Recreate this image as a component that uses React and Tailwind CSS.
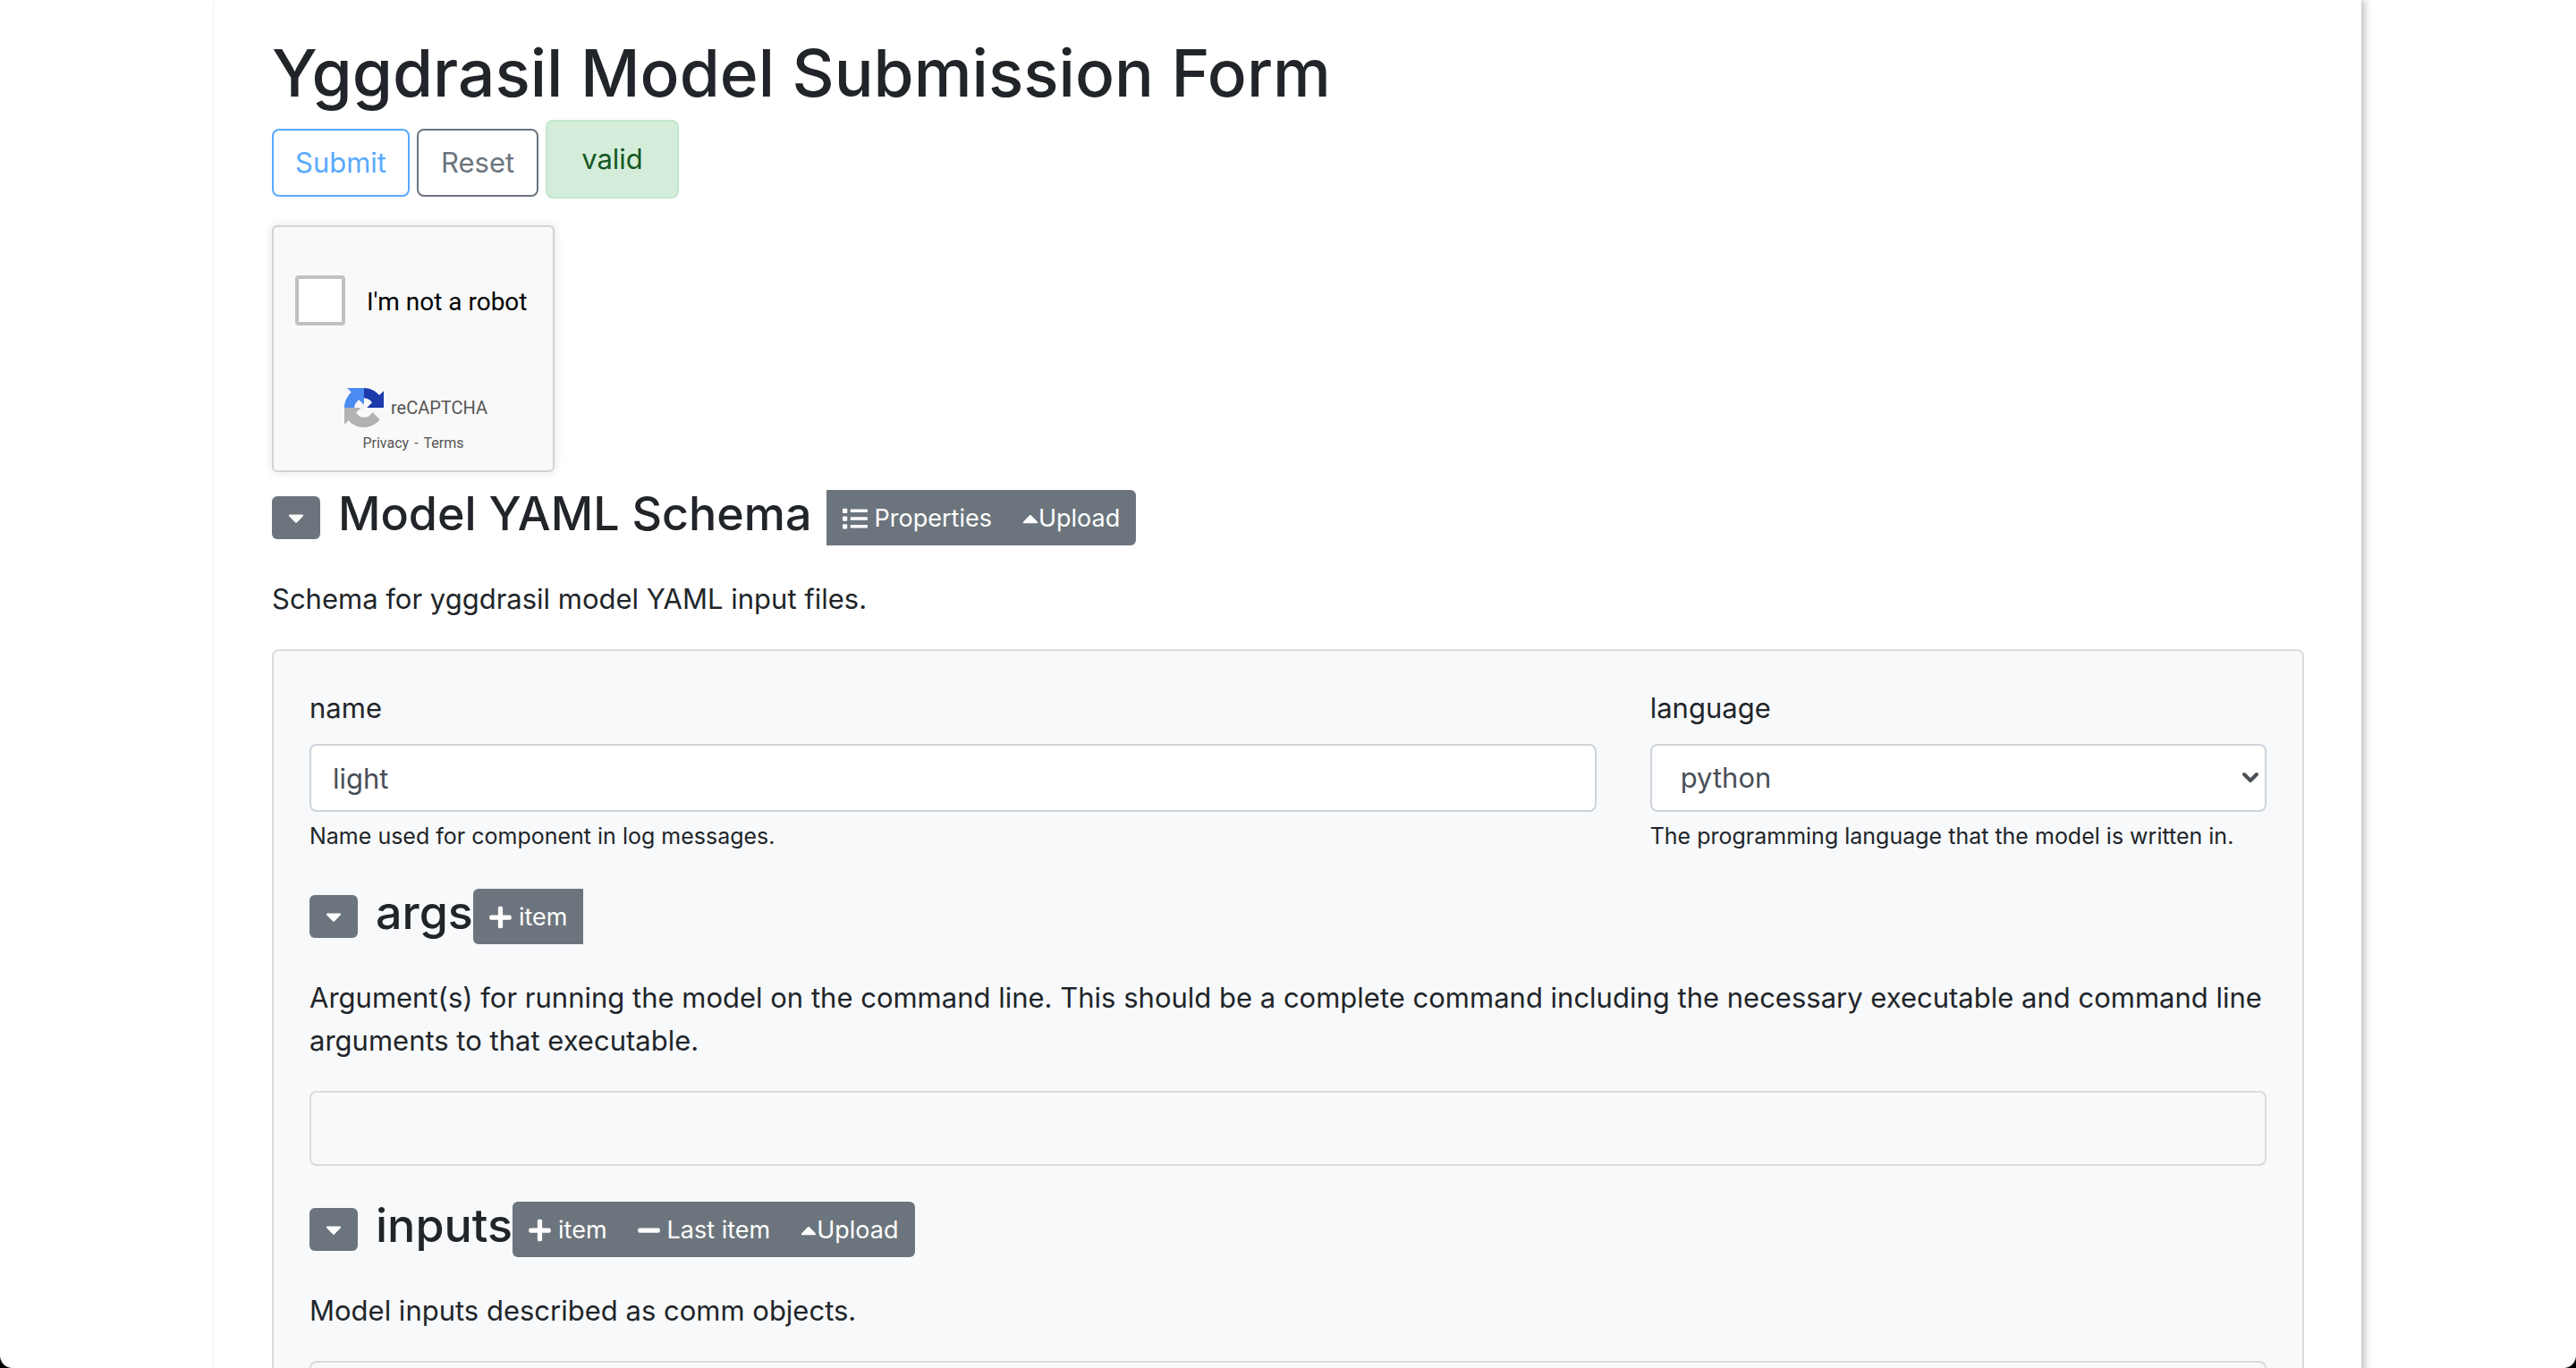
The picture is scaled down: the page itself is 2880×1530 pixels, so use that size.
import React from "react";
import { FaCaretDown, FaCaretUp, FaList, FaMinus, FaPlus } from "react-icons/fa";

const caretClass = "h-7 w-[18px] shrink-0";
const signClass = "mr-2 h-7 w-[25px] shrink-0";

function ToggleButton({ label }) {
  return (
    <button
      type="button"
      aria-label={label}
      className="flex h-12 w-[54px] items-center justify-center rounded-md bg-[#6c757d] text-white"
    >
      <FaCaretDown className={caretClass} />
    </button>
  );
}

function GroupButton({ icon, children, className = "" }) {
  return (
    <button
      type="button"
      className={`flex items-center bg-[#6c757d] px-[18px] pt-[11px] pb-[9px] text-[27px] leading-[42px] text-white ${className}`}
    >
      {icon}
      {children}
    </button>
  );
}

function SectionHeader({ title, titleClass = "", children }) {
  return (
    <div className="flex items-center">
      <ToggleButton label={`Collapse ${title}`} />
      <h2 className={`ml-5 pb-2 text-[52px] leading-[54px] font-medium ${titleClass}`}>
        {title}
      </h2>
      <div className="flex overflow-hidden">{children}</div>
    </div>
  );
}

function Description({ children }) {
  return <p className="mt-9 mb-8">{children}</p>;
}

function RecaptchaLogo() {
  return (
    <svg viewBox="0 0 64 64" className="size-11" aria-hidden="true">
      <path
        fill="#1c3aa9"
        d="M64 31.955c-.001-.46-.012-.918-.032-1.373V4.64l-7.172 7.173C50.88 4.626 41.949.045 31.945.045c-10.411 0-19.66 4.96-25.533 12.64l11.755 11.879a15.6 15.6 0 0 1 4.762-5.344c2.053-1.602 4.963-2.912 9.016-2.912.49 0 .867.057 1.145.165 5.021.397 9.373 3.168 11.935 7.19l-8.321 8.321 27.296-.029"
      />
      <path
        fill="#4a8cf2"
        d="M31.862.094c-.459.001-.917.012-1.373.032H4.547l7.173 7.172C4.533 13.17-.048 22.1-.048 32.105c0 10.411 4.96 19.66 12.64 25.533l11.879-11.755a15.6 15.6 0 0 1-5.344-4.762c-1.602-2.053-2.912-4.963-2.912-9.016 0-.49.057-.867.165-1.145.397-5.021 3.168-9.373 7.19-11.935l8.321 8.321-.029-27.252"
      />
      <path
        fill="#b2b2b2"
        d="M.001 32.045c.001.46.012.918.032 1.373v25.942l7.172-7.173c5.872 7.187 14.803 11.768 24.807 11.768 10.411 0 19.66-4.96 25.533-12.64L45.789 39.436a15.6 15.6 0 0 1-4.762 5.344c-2.053 1.602-4.963 2.912-9.016 2.912-.49 0-.867-.057-1.145-.165-5.021-.397-9.373-3.168-11.935-7.19l8.321-8.321-27.252.029"
      />
    </svg>
  );
}

function Recaptcha() {
  return (
    <div className="mt-[30px] flex w-[316px] flex-col items-center rounded-md border-2 border-[#d3d3d3] bg-[#f9f9f9] pt-[54px] pb-[18px] font-[Roboto,sans-serif] shadow-[0_0_8px_2px_rgba(0,0,0,0.08)]">
      <div className="flex w-full items-center gap-6 pl-6 text-[28px] text-black">
        <input
          id="robot"
          type="checkbox"
          className="size-14 appearance-none rounded-sm border-4 border-[#c1c1c1] bg-white"
        />
        <label htmlFor="robot" className="pt-1 leading-[52px]">
          I'm not a robot
        </label>
      </div>
      <div className="mt-[70px] flex items-center gap-2 pl-[6px] text-xl leading-[44px] text-[#555]">
        <RecaptchaLogo />
        reCAPTCHA
      </div>
      <div className="mt-[6px] flex gap-[6px] text-base leading-6 text-[#555]">
        <a href="#privacy">Privacy</a>
        <span>-</span>
        <a href="#terms">Terms</a>
      </div>
    </div>
  );
}

const fieldClass =
  "h-[76px] w-full rounded-lg border-2 border-[#ced4da] bg-white text-[31px] text-[#495057]";

export default function App() {
  return (
    <div className="h-screen bg-black">
      <div className="h-full overflow-hidden rounded-b-[14px] bg-white">
        <main className="mx-auto min-h-full w-10/12 bg-white px-16 pt-[34px] font-[Inter,sans-serif] text-[31px] leading-[48px] text-[#212529] shadow-[4px_0_8px_rgba(0,0,0,0.24)]">
          <h1 className="text-[73px] leading-[96px] font-medium">Yggdrasil Model Submission Form</h1>

          <div className="mt-1 flex items-end gap-2">
            <button
              type="submit"
              className="mb-0.5 h-[76px] rounded-lg border-2 border-[#59a9ff] px-6 text-[#59a9ff]"
            >
              Submit
            </button>
            <button
              type="button"
              className="mb-0.5 h-[76px] rounded-lg border-2 border-[#6c757d] px-[25px] text-[#6c757d]"
            >
              Reset
            </button>
            <div
              role="status"
              className="rounded-lg border-2 border-[#c3e6cb] bg-[#d4edda] px-[38px] py-[18px] text-[#155724]"
            >
              valid
            </div>
          </div>

          <Recaptcha />

          <section className="mt-5">
            <SectionHeader title="Model YAML Schema" titleClass="mr-4">
              <GroupButton icon={<FaList className="mr-2 size-7 shrink-0" />}>Properties</GroupButton>
              <GroupButton icon={<FaCaretUp className={caretClass} />} className="-ml-0.5 rounded-r-md">
                Upload
              </GroupButton>
            </SectionHeader>
            <Description>Schema for yggdrasil model YAML input files.</Description>

            <div className="rounded-lg border-2 border-[#dadbdd] bg-[#f8f9fb] p-10">
              <div className="grid grid-cols-3 gap-[60px]">
                <div className="col-span-2">
                  <label htmlFor="name" className="mb-4 block">
                    name
                  </label>
                  <input id="name" type="text" defaultValue="light" className={`${fieldClass} px-6`} />
                  <p className="mt-2 text-[25px] leading-[38px]">Name used for component in log messages.</p>
                </div>
                <div>
                  <label htmlFor="language" className="mb-4 block">
                    language
                  </label>
                  <div className="grid items-center">
                    <select
                      id="language"
                      defaultValue="python"
                      className={`${fieldClass} col-start-1 row-start-1 appearance-none px-8`}
                    >
                      <option>python</option>
                    </select>
                    <svg
                      viewBox="0 0 20 14"
                      className="pointer-events-none col-start-1 row-start-1 mr-2 h-[14px] w-5 justify-self-end"
                      fill="none"
                      stroke="#495057"
                      strokeWidth="4"
                      strokeLinecap="round"
                      strokeLinejoin="round"
                      aria-hidden="true"
                    >
                      <path d="M3 3l7 7 7-7" />
                    </svg>
                  </div>
                  <p className="mt-2 text-[25px] leading-[38px]">
                    The programming language that the model is written in.
                  </p>
                </div>
              </div>

              <section className="mt-10">
                <SectionHeader title="args">
                  <GroupButton icon={<FaPlus className={signClass} />} className="rounded-l-md">
                    item
                  </GroupButton>
                </SectionHeader>
                <Description>
                  Argument(s) for running the model on the command line. This should be a complete command
                  including the necessary executable and command line arguments to that executable.
                </Description>
                <div className="rounded-lg border-2 border-[#dadbdd] p-10" />
              </section>

              <section className="mt-10">
                <SectionHeader title="inputs">
                  <GroupButton icon={<FaPlus className={signClass} />} className="rounded-l-md">
                    item
                  </GroupButton>
                  <GroupButton icon={<FaMinus className={signClass} />} className="-ml-0.5">
                    Last item
                  </GroupButton>
                  <GroupButton icon={<FaCaretUp className={caretClass} />} className="-ml-0.5 rounded-r-md">
                    Upload
                  </GroupButton>
                </SectionHeader>
                <Description>Model inputs described as comm objects.</Description>
                <div className="rounded-lg border-2 border-[#dadbdd] p-10" />
              </section>
            </div>
          </section>
        </main>
      </div>
    </div>
  );
}
